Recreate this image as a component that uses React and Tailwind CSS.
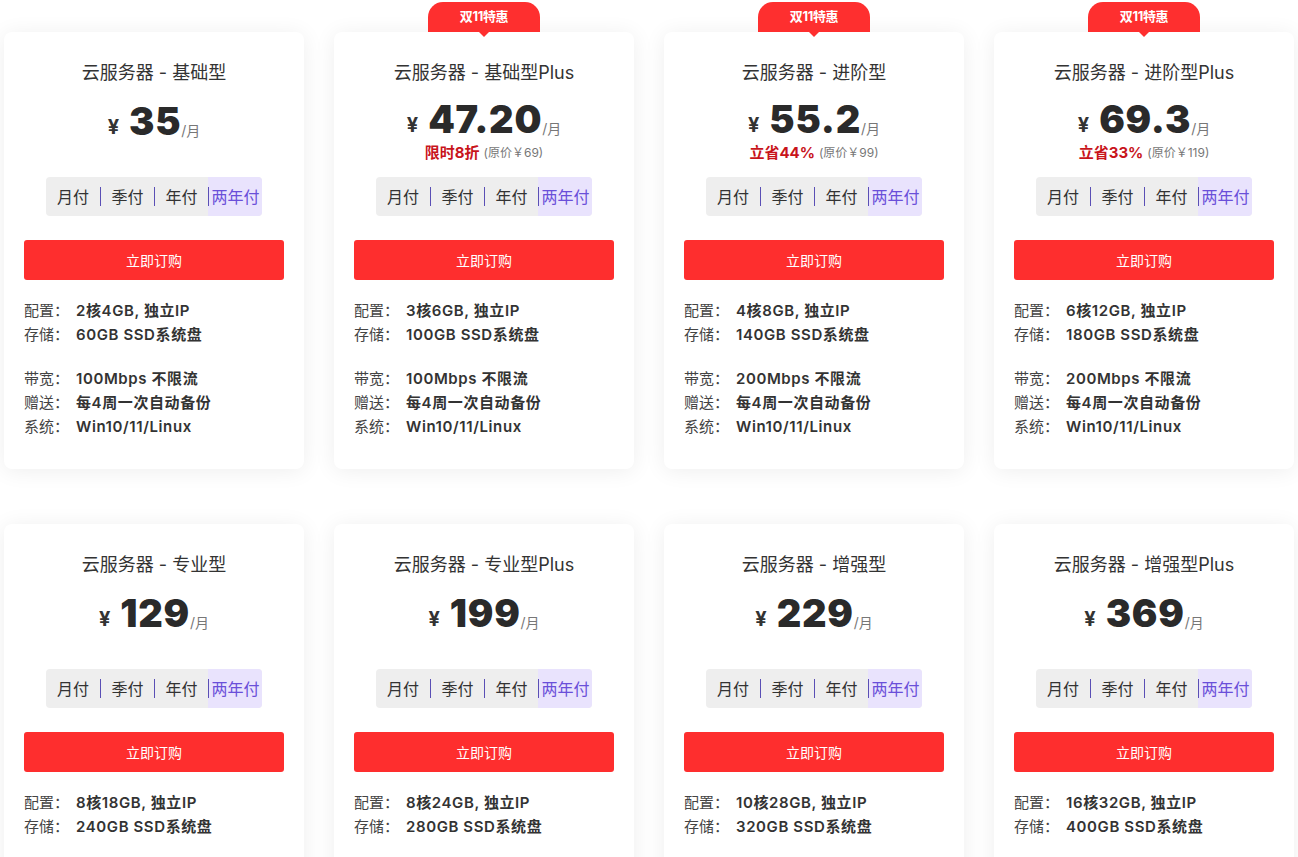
import React from "react";

const plans = [
  { name: "云服务器 - 基础型", price: "35", cfg: "2核4GB, 独立IP", disk: "60GB SSD系统盘", bw: "100Mbps 不限流" },
  { name: "云服务器 - 基础型Plus", price: "47.20", promo: "限时8折", orig: "(原价￥69)", cfg: "3核6GB, 独立IP", disk: "100GB SSD系统盘", bw: "100Mbps 不限流", badge: true },
  { name: "云服务器 - 进阶型", price: "55.2", promo: "立省44%", orig: "(原价￥99)", cfg: "4核8GB, 独立IP", disk: "140GB SSD系统盘", bw: "200Mbps 不限流", badge: true },
  { name: "云服务器 - 进阶型Plus", price: "69.3", promo: "立省33%", orig: "(原价￥119)", cfg: "6核12GB, 独立IP", disk: "180GB SSD系统盘", bw: "200Mbps 不限流", badge: true },
  { name: "云服务器 - 专业型", price: "129", cfg: "8核18GB, 独立IP", disk: "240GB SSD系统盘", bw: "200Mbps 不限流" },
  { name: "云服务器 - 专业型Plus", price: "199", cfg: "8核24GB, 独立IP", disk: "280GB SSD系统盘", bw: "200Mbps 不限流" },
  { name: "云服务器 - 增强型", price: "229", cfg: "10核28GB, 独立IP", disk: "320GB SSD系统盘", bw: "300Mbps 不限流" },
  { name: "云服务器 - 增强型Plus", price: "369", cfg: "16核32GB, 独立IP", disk: "400GB SSD系统盘", bw: "300Mbps 不限流" },
];

const font = { fontFamily: 'Inter, "Noto Sans CJK SC", sans-serif' };

function Row({ label, value }) {
  return (
    <div className="flex h-6 items-center text-[15px] leading-6">
      <span className="w-[52px] text-[#444]">{label}</span>
      <span className="font-semibold tracking-[0.04em] text-[#333]">{value}</span>
    </div>
  );
}

function Card({ p }) {
  return (
    <div className="relative w-[300px] rounded-lg bg-white pt-[29px] pb-[30px] shadow-[0_2px_22px_rgba(0,0,0,0.07)]">
      {p.badge && (
        <div className="absolute left-1/2 top-[-30px] flex h-[30px] w-[112px] -translate-x-1/2 items-center justify-center rounded-t-[15px] bg-[#fe2f2f]">
          <span className="text-[13px] font-bold tracking-tight text-white">双11特惠</span>
          <div className="absolute bottom-[-5px] left-1/2 h-0 w-0 -translate-x-1/2 border-l-[5px] border-r-[5px] border-t-[5px] border-l-transparent border-r-transparent border-t-[#fe2f2f]" />
        </div>
      )}
      <div className="h-6 text-center text-[18px] leading-6 text-[#333]">{p.name}</div>
      <div className="flex h-[92px] flex-col items-center">
        <div className={"flex h-[50px] items-end justify-center " + (p.promo ? "mt-[9px]" : "mt-[11px]")}>
          <span className="mb-[9px] mr-[10px] text-[20px] font-bold leading-none text-[#333]">¥</span>
          <span className="text-[38px] font-black leading-[50px] tracking-[0.02em] text-[#2a2a2a]">{p.price}</span>
          <span className="mb-[8px] text-[14px] leading-none text-[#777]">/月</span>
        </div>
        {p.promo && (
          <div className="flex h-[18px] items-center">
            <span className="text-[15px] font-bold text-[#c8141b]">{p.promo}</span>
            <span className="ml-1 text-[12px] text-[#777]">{p.orig}</span>
          </div>
        )}
      </div>
      <div className="mx-auto flex h-[39px] w-[216px] items-center overflow-hidden rounded bg-[#eeeeee] text-[16px]">
        <div className="flex h-full w-[54px] items-center justify-center text-[#333]">月付</div>
        <div className="flex h-full w-[54px] items-center">
          <div className="h-[19px] w-px bg-[#5a4fb5]" />
          <div className="flex-1 text-center text-[#333]">季付</div>
        </div>
        <div className="flex h-full w-[54px] items-center">
          <div className="h-[19px] w-px bg-[#5a4fb5]" />
          <div className="flex-1 text-center text-[#333]">年付</div>
        </div>
        <div className="flex h-full w-[54px] items-center bg-[#e9e3fd]">
          <div className="h-[19px] w-px bg-[#5a4fb5]" />
          <div className="flex-1 text-center text-[#6a4fd9]">两年付</div>
        </div>
      </div>
      <div className="mx-5 mt-6 flex h-10 items-center justify-center rounded-[3px] bg-[#fe2e2e] text-[14px] text-white">
        立即订购
      </div>
      <div className="mx-5 mt-[19px]">
        <Row label="配置：" value={p.cfg} />
        <Row label="存储：" value={p.disk} />
        <div className="h-5" />
        <Row label="带宽：" value={p.bw} />
        <Row label="赠送：" value="每4周一次自动备份" />
        <Row label="系统：" value="Win10/11/Linux" />
      </div>
    </div>
  );
}

export default function App() {
  return (
    <div className="h-screen overflow-hidden bg-white" style={font}>
      <div className="grid grid-cols-[repeat(4,300px)] gap-x-[30px] gap-y-[55px] pl-1 pt-8">
        {plans.map((p, i) => (
          <Card key={i} p={p} />
        ))}
      </div>
    </div>
  );
}
